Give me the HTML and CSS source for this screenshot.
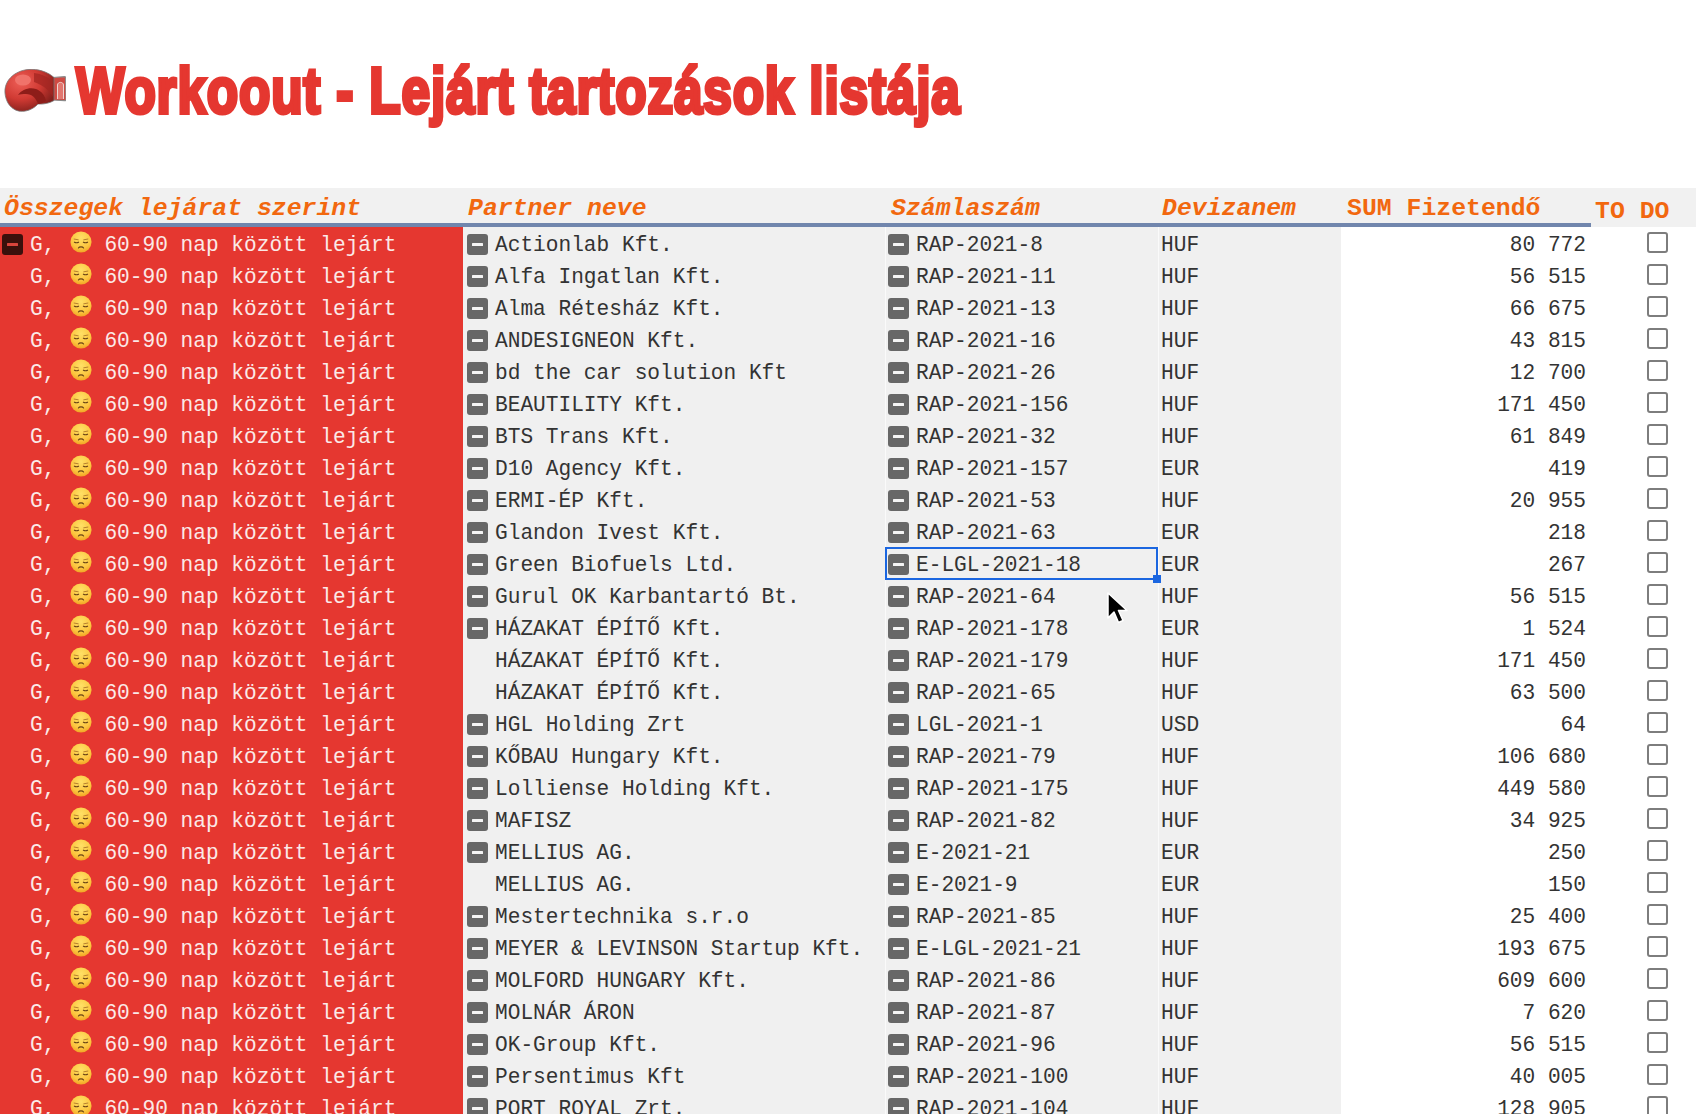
FILE: index.html
```html
<!DOCTYPE html>
<html lang="hu">
<head>
<meta charset="utf-8">
<title>Workoout - Lejárt tartozások listája</title>
<link rel="stylesheet" href="styles.css">
</head>
<body>
<svg class="defs" width="0" height="0" aria-hidden="true">
  <defs>
    <radialGradient id="faceFill" cx="50%" cy="30%" r="75%">
      <stop offset="0" stop-color="#ffe066"/>
      <stop offset="0.65" stop-color="#fcc63f"/>
      <stop offset="1" stop-color="#f09c1f"/>
    </radialGradient>
    <radialGradient id="gloveFill" cx="32%" cy="30%" r="75%">
      <stop offset="0" stop-color="#ee5f57"/>
      <stop offset="0.55" stop-color="#d03a33"/>
      <stop offset="1" stop-color="#84201c"/>
    </radialGradient>
    <symbol id="face" viewBox="0 0 24 24">
      <circle cx="12" cy="12" r="11.500" fill="url(#faceFill)"/>
      <path d="M4.500 8.800l4.500.8M19.500 8.800l-4.500.8" stroke="#b07a2a" stroke-width="1" fill="none" stroke-linecap="round"/>
      <path d="M4.800 12.200c1.400.7 3.200.7 4.600 0M19.200 12.200c-1.400.7-3.200.7-4.600 0" stroke="#6b4516" stroke-width="1.200" fill="none" stroke-linecap="round"/>
      <path d="M9.200 18.500c.9-1.600 4.700-1.600 5.600 0" stroke="#6b4516" stroke-width="1.300" fill="none" stroke-linecap="round"/>
    </symbol>
    <symbol id="minus" viewBox="0 0 21 21">
      <rect width="21" height="21" rx="3" fill="currentColor"/>
      <rect x="5" y="9" width="11" height="3" rx="0.500" class="dash"/>
    </symbol>
  </defs>
</svg>

<h1 class="title">
  <svg class="glove" viewBox="0 0 62 44" width="62" height="44" aria-hidden="true">
    <path d="M49 8.500l11.500-.8c.8 0 1.200.5 1.200 1.300l.3 21.500c0 .8-.4 1.200-1.200 1.200L49 31z" fill="#cf4a43" stroke="#8b8b8b" stroke-width="1.200"/>
    <path d="M53.500 30V16c0-3.500 6-3.500 6 0v14" fill="#e2766f" stroke="#efd6d3" stroke-width="1"/>
    <path d="M1 24C0 12 10 2 24 .5 34-.5 44 3 50 8.500v23c-4 2.500-10 4-16 3.500-6 7-18 10-25 4.500C4 36 1.500 30 1 24z" fill="url(#gloveFill)" stroke="#777" stroke-width="0.800"/>
    <ellipse cx="19" cy="11" rx="8" ry="5.500" fill="#f0736b"/>
    <path d="M14 26c4-6 12-8 18-6 5 2 9 6 10 12-3 2-6 3-8 3-2-6-6-10-12-10-3 0-6 0-8 1z" fill="#8d1d19"/>
    <path d="M30 4c8 1 14 4 18 8l1 16c-4-7-10-12-19-15z" fill="#a32521" opacity="0.750"/>
  </svg>
  <span class="title-text">Workoout - Lejárt tartozások listája</span>
</h1>

<main class="sheet">
  <div class="row head">
    <div class="h first">Összegek lejárat szerint</div>
    <div class="h">Partner neve</div>
    <div class="h second">Számlaszám</div>
    <div class="h third">Devizanem</div>
    <div class="h upright second">SUM Fizetendő</div>
    <div class="h upright todo-head">TO DO</div>
  </div>

  <div class="row"><div class="c aging"><svg class="ico dark"><use href="#minus"/></svg><span>G,</span><svg class="face"><use href="#face"/></svg><span>60-90 nap között lejárt</span></div><div class="c partner"><svg class="ico"><use href="#minus"/></svg>Actionlab Kft.</div><div class="c inv"><svg class="ico"><use href="#minus"/></svg>RAP-2021-8</div><div class="c cur">HUF</div><div class="c sum">80 772</div><div class="c todo"><span class="box"></span></div></div>
  <div class="row"><div class="c aging"><i class="gap"></i><span>G,</span><svg class="face"><use href="#face"/></svg><span>60-90 nap között lejárt</span></div><div class="c partner"><svg class="ico"><use href="#minus"/></svg>Alfa Ingatlan Kft.</div><div class="c inv"><svg class="ico"><use href="#minus"/></svg>RAP-2021-11</div><div class="c cur">HUF</div><div class="c sum">56 515</div><div class="c todo"><span class="box"></span></div></div>
  <div class="row"><div class="c aging"><i class="gap"></i><span>G,</span><svg class="face"><use href="#face"/></svg><span>60-90 nap között lejárt</span></div><div class="c partner"><svg class="ico"><use href="#minus"/></svg>Alma Rétesház Kft.</div><div class="c inv"><svg class="ico"><use href="#minus"/></svg>RAP-2021-13</div><div class="c cur">HUF</div><div class="c sum">66 675</div><div class="c todo"><span class="box"></span></div></div>
  <div class="row"><div class="c aging"><i class="gap"></i><span>G,</span><svg class="face"><use href="#face"/></svg><span>60-90 nap között lejárt</span></div><div class="c partner"><svg class="ico"><use href="#minus"/></svg>ANDESIGNEON Kft.</div><div class="c inv"><svg class="ico"><use href="#minus"/></svg>RAP-2021-16</div><div class="c cur">HUF</div><div class="c sum">43 815</div><div class="c todo"><span class="box"></span></div></div>
  <div class="row"><div class="c aging"><i class="gap"></i><span>G,</span><svg class="face"><use href="#face"/></svg><span>60-90 nap között lejárt</span></div><div class="c partner"><svg class="ico"><use href="#minus"/></svg>bd the car solution Kft</div><div class="c inv"><svg class="ico"><use href="#minus"/></svg>RAP-2021-26</div><div class="c cur">HUF</div><div class="c sum">12 700</div><div class="c todo"><span class="box"></span></div></div>
  <div class="row"><div class="c aging"><i class="gap"></i><span>G,</span><svg class="face"><use href="#face"/></svg><span>60-90 nap között lejárt</span></div><div class="c partner"><svg class="ico"><use href="#minus"/></svg>BEAUTILITY Kft.</div><div class="c inv"><svg class="ico"><use href="#minus"/></svg>RAP-2021-156</div><div class="c cur">HUF</div><div class="c sum">171 450</div><div class="c todo"><span class="box"></span></div></div>
  <div class="row"><div class="c aging"><i class="gap"></i><span>G,</span><svg class="face"><use href="#face"/></svg><span>60-90 nap között lejárt</span></div><div class="c partner"><svg class="ico"><use href="#minus"/></svg>BTS Trans Kft.</div><div class="c inv"><svg class="ico"><use href="#minus"/></svg>RAP-2021-32</div><div class="c cur">HUF</div><div class="c sum">61 849</div><div class="c todo"><span class="box"></span></div></div>
  <div class="row"><div class="c aging"><i class="gap"></i><span>G,</span><svg class="face"><use href="#face"/></svg><span>60-90 nap között lejárt</span></div><div class="c partner"><svg class="ico"><use href="#minus"/></svg>D10 Agency Kft.</div><div class="c inv"><svg class="ico"><use href="#minus"/></svg>RAP-2021-157</div><div class="c cur">EUR</div><div class="c sum">419</div><div class="c todo"><span class="box"></span></div></div>
  <div class="row"><div class="c aging"><i class="gap"></i><span>G,</span><svg class="face"><use href="#face"/></svg><span>60-90 nap között lejárt</span></div><div class="c partner"><svg class="ico"><use href="#minus"/></svg>ERMI-ÉP Kft.</div><div class="c inv"><svg class="ico"><use href="#minus"/></svg>RAP-2021-53</div><div class="c cur">HUF</div><div class="c sum">20 955</div><div class="c todo"><span class="box"></span></div></div>
  <div class="row"><div class="c aging"><i class="gap"></i><span>G,</span><svg class="face"><use href="#face"/></svg><span>60-90 nap között lejárt</span></div><div class="c partner"><svg class="ico"><use href="#minus"/></svg>Glandon Ivest Kft.</div><div class="c inv"><svg class="ico"><use href="#minus"/></svg>RAP-2021-63</div><div class="c cur">EUR</div><div class="c sum">218</div><div class="c todo"><span class="box"></span></div></div>
  <div class="row"><div class="c aging"><i class="gap"></i><span>G,</span><svg class="face"><use href="#face"/></svg><span>60-90 nap között lejárt</span></div><div class="c partner"><svg class="ico"><use href="#minus"/></svg>Green Biofuels Ltd.</div><div class="c inv selected"><svg class="ico"><use href="#minus"/></svg>E-LGL-2021-18<span class="sel-frame"></span><span class="sel-handle"></span></div><div class="c cur">EUR</div><div class="c sum">267</div><div class="c todo"><span class="box"></span></div></div>
  <div class="row"><div class="c aging"><i class="gap"></i><span>G,</span><svg class="face"><use href="#face"/></svg><span>60-90 nap között lejárt</span></div><div class="c partner"><svg class="ico"><use href="#minus"/></svg>Gurul OK Karbantartó Bt.</div><div class="c inv"><svg class="ico"><use href="#minus"/></svg>RAP-2021-64</div><div class="c cur">HUF</div><div class="c sum">56 515</div><div class="c todo"><span class="box"></span></div></div>
  <div class="row"><div class="c aging"><i class="gap"></i><span>G,</span><svg class="face"><use href="#face"/></svg><span>60-90 nap között lejárt</span></div><div class="c partner"><svg class="ico"><use href="#minus"/></svg>HÁZAKAT ÉPÍTŐ Kft.</div><div class="c inv"><svg class="ico"><use href="#minus"/></svg>RAP-2021-178</div><div class="c cur">EUR</div><div class="c sum">1 524</div><div class="c todo"><span class="box"></span></div></div>
  <div class="row"><div class="c aging"><i class="gap"></i><span>G,</span><svg class="face"><use href="#face"/></svg><span>60-90 nap között lejárt</span></div><div class="c partner"><i class="ico-gap"></i>HÁZAKAT ÉPÍTŐ Kft.</div><div class="c inv"><svg class="ico"><use href="#minus"/></svg>RAP-2021-179</div><div class="c cur">HUF</div><div class="c sum">171 450</div><div class="c todo"><span class="box"></span></div></div>
  <div class="row"><div class="c aging"><i class="gap"></i><span>G,</span><svg class="face"><use href="#face"/></svg><span>60-90 nap között lejárt</span></div><div class="c partner"><i class="ico-gap"></i>HÁZAKAT ÉPÍTŐ Kft.</div><div class="c inv"><svg class="ico"><use href="#minus"/></svg>RAP-2021-65</div><div class="c cur">HUF</div><div class="c sum">63 500</div><div class="c todo"><span class="box"></span></div></div>
  <div class="row"><div class="c aging"><i class="gap"></i><span>G,</span><svg class="face"><use href="#face"/></svg><span>60-90 nap között lejárt</span></div><div class="c partner"><svg class="ico"><use href="#minus"/></svg>HGL Holding Zrt</div><div class="c inv"><svg class="ico"><use href="#minus"/></svg>LGL-2021-1</div><div class="c cur">USD</div><div class="c sum">64</div><div class="c todo"><span class="box"></span></div></div>
  <div class="row"><div class="c aging"><i class="gap"></i><span>G,</span><svg class="face"><use href="#face"/></svg><span>60-90 nap között lejárt</span></div><div class="c partner"><svg class="ico"><use href="#minus"/></svg>KŐBAU Hungary Kft.</div><div class="c inv"><svg class="ico"><use href="#minus"/></svg>RAP-2021-79</div><div class="c cur">HUF</div><div class="c sum">106 680</div><div class="c todo"><span class="box"></span></div></div>
  <div class="row"><div class="c aging"><i class="gap"></i><span>G,</span><svg class="face"><use href="#face"/></svg><span>60-90 nap között lejárt</span></div><div class="c partner"><svg class="ico"><use href="#minus"/></svg>Lolliense Holding Kft.</div><div class="c inv"><svg class="ico"><use href="#minus"/></svg>RAP-2021-175</div><div class="c cur">HUF</div><div class="c sum">449 580</div><div class="c todo"><span class="box"></span></div></div>
  <div class="row"><div class="c aging"><i class="gap"></i><span>G,</span><svg class="face"><use href="#face"/></svg><span>60-90 nap között lejárt</span></div><div class="c partner"><svg class="ico"><use href="#minus"/></svg>MAFISZ</div><div class="c inv"><svg class="ico"><use href="#minus"/></svg>RAP-2021-82</div><div class="c cur">HUF</div><div class="c sum">34 925</div><div class="c todo"><span class="box"></span></div></div>
  <div class="row"><div class="c aging"><i class="gap"></i><span>G,</span><svg class="face"><use href="#face"/></svg><span>60-90 nap között lejárt</span></div><div class="c partner"><svg class="ico"><use href="#minus"/></svg>MELLIUS AG.</div><div class="c inv"><svg class="ico"><use href="#minus"/></svg>E-2021-21</div><div class="c cur">EUR</div><div class="c sum">250</div><div class="c todo"><span class="box"></span></div></div>
  <div class="row"><div class="c aging"><i class="gap"></i><span>G,</span><svg class="face"><use href="#face"/></svg><span>60-90 nap között lejárt</span></div><div class="c partner"><i class="ico-gap"></i>MELLIUS AG.</div><div class="c inv"><svg class="ico"><use href="#minus"/></svg>E-2021-9</div><div class="c cur">EUR</div><div class="c sum">150</div><div class="c todo"><span class="box"></span></div></div>
  <div class="row"><div class="c aging"><i class="gap"></i><span>G,</span><svg class="face"><use href="#face"/></svg><span>60-90 nap között lejárt</span></div><div class="c partner"><svg class="ico"><use href="#minus"/></svg>Mestertechnika s.r.o</div><div class="c inv"><svg class="ico"><use href="#minus"/></svg>RAP-2021-85</div><div class="c cur">HUF</div><div class="c sum">25 400</div><div class="c todo"><span class="box"></span></div></div>
  <div class="row"><div class="c aging"><i class="gap"></i><span>G,</span><svg class="face"><use href="#face"/></svg><span>60-90 nap között lejárt</span></div><div class="c partner"><svg class="ico"><use href="#minus"/></svg>MEYER &amp; LEVINSON Startup Kft.</div><div class="c inv"><svg class="ico"><use href="#minus"/></svg>E-LGL-2021-21</div><div class="c cur">HUF</div><div class="c sum">193 675</div><div class="c todo"><span class="box"></span></div></div>
  <div class="row"><div class="c aging"><i class="gap"></i><span>G,</span><svg class="face"><use href="#face"/></svg><span>60-90 nap között lejárt</span></div><div class="c partner"><svg class="ico"><use href="#minus"/></svg>MOLFORD HUNGARY Kft.</div><div class="c inv"><svg class="ico"><use href="#minus"/></svg>RAP-2021-86</div><div class="c cur">HUF</div><div class="c sum">609 600</div><div class="c todo"><span class="box"></span></div></div>
  <div class="row"><div class="c aging"><i class="gap"></i><span>G,</span><svg class="face"><use href="#face"/></svg><span>60-90 nap között lejárt</span></div><div class="c partner"><svg class="ico"><use href="#minus"/></svg>MOLNÁR ÁRON</div><div class="c inv"><svg class="ico"><use href="#minus"/></svg>RAP-2021-87</div><div class="c cur">HUF</div><div class="c sum">7 620</div><div class="c todo"><span class="box"></span></div></div>
  <div class="row"><div class="c aging"><i class="gap"></i><span>G,</span><svg class="face"><use href="#face"/></svg><span>60-90 nap között lejárt</span></div><div class="c partner"><svg class="ico"><use href="#minus"/></svg>OK-Group Kft.</div><div class="c inv"><svg class="ico"><use href="#minus"/></svg>RAP-2021-96</div><div class="c cur">HUF</div><div class="c sum">56 515</div><div class="c todo"><span class="box"></span></div></div>
  <div class="row"><div class="c aging"><i class="gap"></i><span>G,</span><svg class="face"><use href="#face"/></svg><span>60-90 nap között lejárt</span></div><div class="c partner"><svg class="ico"><use href="#minus"/></svg>Persentimus Kft</div><div class="c inv"><svg class="ico"><use href="#minus"/></svg>RAP-2021-100</div><div class="c cur">HUF</div><div class="c sum">40 005</div><div class="c todo"><span class="box"></span></div></div>
  <div class="row"><div class="c aging"><i class="gap"></i><span>G,</span><svg class="face"><use href="#face"/></svg><span>60-90 nap között lejárt</span></div><div class="c partner"><svg class="ico"><use href="#minus"/></svg>PORT ROYAL Zrt.</div><div class="c inv"><svg class="ico"><use href="#minus"/></svg>RAP-2021-104</div><div class="c cur">HUF</div><div class="c sum">128 905</div><div class="c todo"><span class="box"></span></div></div>

  <svg class="cursor" viewBox="0 0 22 34" width="22" height="34" aria-hidden="true">
    <path d="M2 1v25l6-6 4.500 10.500 4.500-2L12.500 18.500H21z" fill="#000" stroke="#fff" stroke-width="1.500" stroke-linejoin="round"/>
  </svg>
</main>
</body>
</html>
```

FILE: styles.css
```css
html, body {
  margin: 0;
  padding: 0;
  height: 1114px;
  overflow: hidden;
  background: #fff;
}

.defs {
  position: absolute;
}

.title {
  display: flex;
  align-items: center;
  height: 188px;
  margin: 0;
  padding: 0 0 6px 4px;
  box-sizing: border-box;
  font-weight: 700;
}

.glove {
  flex: none;
  margin-right: 10px;
}

.title-text {
  display: inline-block;
  font: 700 64px/1 "Liberation Sans", Arial, sans-serif;
  letter-spacing: 1px;
  color: #e53730;
  -webkit-text-stroke: 4px #e53730;
  white-space: nowrap;
  transform: scaleX(0.803);
  transform-origin: left center;
}

.sheet {
  position: relative;
  font: 21.170px/32px "Liberation Mono", "Courier New", monospace;
  color: #333;
}

.row {
  display: grid;
  grid-template-columns: 463px 422px 273px 183px 250px 105px;
  height: 32px;
}

.head {
  height: 39px;
  background: #f1f1f1;
  position: relative;
}

.head::after {
  content: "";
  position: absolute;
  left: 0;
  top: 35px;
  width: 1591px;
  height: 4px;
  background: #7186ad;
}

.h {
  font: italic 700 24.800px/40px "Liberation Mono", "Courier New", monospace;
  color: #f2680f;
  padding-left: 5px;
  white-space: nowrap;
}

.h.first {
  padding-left: 4px;
}

.h.second {
  padding-left: 6px;
}

.h.third {
  padding-left: 4px;
}

.upright {
  font-style: normal;
}

.todo-head {
  padding: 3px 0 0 4px;
}

.c {
  display: flex;
  align-items: center;
  box-sizing: border-box;
  height: 32px;
  padding-top: 4px;
  white-space: pre;
  min-width: 0;
}

.aging {
  background: #e53730;
  color: #fbe9e7;
  padding-left: 2px;
}

.aging span:first-of-type {
  margin-left: 7px;
}

.gap {
  display: block;
  width: 21px;
  height: 21px;
}

.face {
  flex: none;
  width: 22px;
  height: 22px;
  margin: -7px 12px 0 15px;
}

.partner {
  background: #f0f0f0;
  padding-left: 4px;
}

.inv {
  position: relative;
  background: #f0f0f0;
  border-left: 1px solid #fafafa;
  padding-left: 2px;
}

.selected {
  z-index: 1;
}

.cur {
  background: #f0f0f0;
  border-left: 1px solid #fafafa;
  padding-left: 2px;
}

.sum {
  justify-content: flex-end;
  padding-right: 5px;
}

.todo {
  padding-left: 56px;
}

.ico {
  flex: none;
  width: 21px;
  height: 21px;
  margin: -2px 7px 0 0;
  color: #676767;
}

.ico-gap {
  display: block;
  flex: none;
  width: 21px;
  height: 21px;
  margin-right: 7px;
}

.dash {
  fill: var(--dash, #f4f4f4);
}

.ico.dark {
  margin-right: 0;
  color: #3a100c;
  --dash: #d8443c;
}

.box {
  display: block;
  box-sizing: border-box;
  width: 21px;
  height: 21px;
  margin-top: -6px;
  border: 2px solid #7d7d7d;
  border-radius: 3px;
  background: #fff;
}

.sel-frame {
  position: absolute;
  left: -1px;
  top: 0;
  right: 0;
  bottom: -1px;
  border: 2px solid #1b66e0;
  box-sizing: border-box;
  pointer-events: none;
}

.sel-handle {
  position: absolute;
  right: -3px;
  bottom: -4px;
  width: 8px;
  height: 8px;
  background: #1b66e0;
}

.cursor {
  position: absolute;
  left: 1106px;
  top: 404px;
}
```
